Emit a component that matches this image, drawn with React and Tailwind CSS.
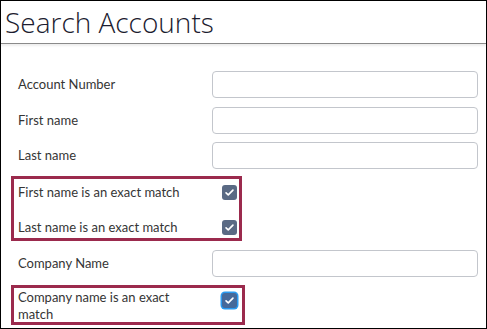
import React from "react";

const labelFont = { fontFamily: "Lato, 'Open Sans', sans-serif" };

// ---- Small pieces ----
function Check({ focused = false }) {
  return (
    <span
      className={
        "flex h-[15px] w-[15px] shrink-0 items-center justify-center rounded-[3px] " +
        (focused ? "bg-[#46699a] ring-[1.5px] ring-[#2a9af0]" : "bg-[#5a6a84]")
      }
    >
      <svg viewBox="0 0 16 16" className="h-[11px] w-[11px]">
        <path
          d="M3 8.5l3.2 3L13 4.5"
          fill="none"
          stroke="white"
          strokeWidth="2.4"
          strokeLinecap="round"
          strokeLinejoin="round"
        />
      </svg>
    </span>
  );
}

function FieldRow({ label, className = "" }) {
  return (
    <div className={"flex h-[27px] items-center pl-[7px] " + className}>
      <label className="w-[194px] text-[13px] text-[#353535]" style={labelFont}>
        {label}
      </label>
      <input
        className="h-[27px] w-[266px] rounded-[4px] border border-[#c3c6cc] bg-white outline-none"
        type="text"
      />
    </div>
  );
}

function CheckRow({ label, className = "" }) {
  return (
    <div className={"flex h-[21px] items-center " + className}>
      <span className="w-[204px] text-[13px] text-[#353535]" style={labelFont}>
        {label}
      </span>
      <Check />
    </div>
  );
}

export default function App() {
  return (
    <div className="box-border h-[329px] w-[487px] overflow-hidden border border-black bg-white">
      {/* Header */}
      <header className="h-[43px] border-b border-[#8a8a8a] shadow-[0_2px_2px_rgba(0,0,0,0.07)]">
        <h1
          className="pl-[4px] pt-[2px] text-[28px] font-light leading-[38px] text-[#1c1c30]"
          style={{ fontFamily: "'Open Sans', 'Noto Sans', sans-serif" }}
        >
          Search Accounts
        </h1>
      </header>

      <main className="pl-[10px] pt-[27px]">
        <FieldRow label="Account Number" />
        <FieldRow label="First name" className="mt-[9px]" />
        <FieldRow label="Last name" className="mt-[8px]" />

        <div className="mt-[7px] h-[65px] w-[231px] border-[3px] border-[#9b2a4d] pl-[4px] pt-[3px]">
          <CheckRow label="First name is an exact match" />
          <CheckRow label="Last name is an exact match" className="mt-[14px]" />
        </div>

        <FieldRow label="Company Name" className="mt-[9px]" />

        <div className="mt-[8px] flex h-[40px] w-[234px] items-start border-[3px] border-[#9b2a4d] pl-[4px]">
          <span
            className="w-[180px] pt-[1px] text-[13px] leading-[17px] text-[#353535]"
            style={labelFont}
          >
            Company name is an exact match
          </span>
          <span className="ml-[24px] mt-[5px]">
            <Check focused />
          </span>
        </div>
      </main>
    </div>
  );
}
